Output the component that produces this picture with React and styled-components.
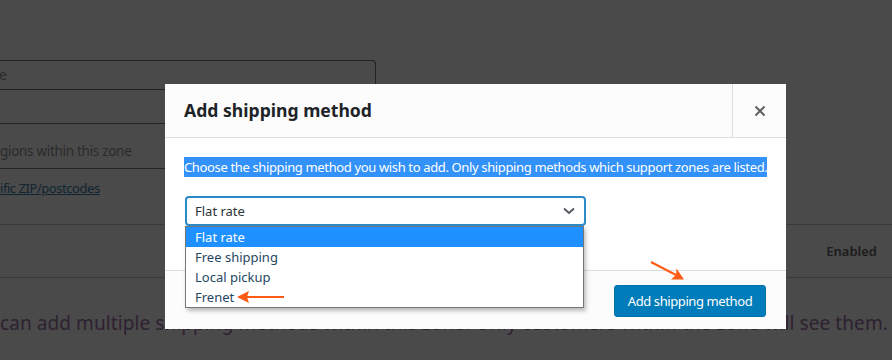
import React from "react";
import styled, { createGlobalStyle } from "styled-components";

const GlobalStyle = createGlobalStyle`
  html, body {
    margin: 0;
    padding: 0;
    background: #4a4a4a;
  }
  body {
    font-family: "Noto Sans", "Open Sans", sans-serif;
  }
`;

const options = ["Flat rate", "Free shipping", "Local pickup", "Frenet"];

const App = () => {
  return (
    <Page>
      <GlobalStyle />
      <Form>
        <ZoneInput>e</ZoneInput>
        <FieldRow $h={34} />
        <FieldRow $h={45}>
          <FieldText $pt={18}>gions within this zone</FieldText>
        </FieldRow>
        <FieldRow $h={56} $last>
          <FieldLink>ific ZIP/postcodes</FieldLink>
        </FieldRow>
      </Form>
      <TableHead>
        <HeadCell>Enabled</HeadCell>
      </TableHead>
      <Intro>
        can add multiple shipping methods within this zone. Only customers within the zone will see them.
      </Intro>

      <Modal>
        <ModalHeader>
          <ModalTitle>Add shipping method</ModalTitle>
          <CloseButton>
            <svg width="12" height="12" viewBox="0 0 12 12">
              <path d="M1.5 1.5 L10.5 10.5 M10.5 1.5 L1.5 10.5" stroke="#5f5f5f" strokeWidth="2" />
            </svg>
          </CloseButton>
        </ModalHeader>
        <ModalBody>
          <Description>
            <Selected>
              Choose the shipping method you wish to add. Only shipping methods which support zones are listed.
            </Selected>
          </Description>
          <SelectWrap>
            <SelectBox>
              <span>Flat rate</span>
              <svg width="14" height="10" viewBox="0 0 14 10">
                <path d="M2 2.5 L7 7 L12 2.5" stroke="#50575e" strokeWidth="1.8" fill="none" />
              </svg>
            </SelectBox>
            <OptionList>
              {options.map((o, i) => (
                <OptionItem key={o} $active={i === 0}>
                  {o}
                </OptionItem>
              ))}
            </OptionList>
          </SelectWrap>
        </ModalBody>
        <ModalFooter>
          <PrimaryButton>Add shipping method</PrimaryButton>
        </ModalFooter>
      </Modal>

      {/* annotation arrows */}
      <Annotation width="892" height="360" viewBox="0 0 892 360">
        <path d="M284 297 L246 297" stroke="#ff5b14" strokeWidth="2.2" />
        <path d="M237 297 L249 291 L247 297 L249 303 Z" fill="#ff5b14" />
        <path d="M651 262 L676 275" stroke="#ff5b14" strokeWidth="2" />
        <path d="M684 279.5 L671 279.5 L676 275 L676.5 268.5 Z" fill="#ff5b14" />
      </Annotation>
    </Page>
  );
};

const Page = styled.div`
  position: relative;
  width: 892px;
  height: 360px;
  overflow: hidden;
  background: #4a4a4a;
  color: #2a2a2a;
  font-size: 13px;
`;

const Form = styled.div`
  display: flex;
  flex-direction: column;
  width: 376px;
  padding-top: 60px;
`;

const ZoneInput = styled.div`
  height: 28px;
  border: 1px solid #222222;
  border-left: none;
  border-radius: 0 4px 4px 0;
  box-sizing: content-box;
  line-height: 28px;
  font-size: 14px;
  color: #2c2c2c;
  margin-left: -1px;
`;

const FieldRow = styled.div`
  height: ${(p) => p.$h - 1}px;
  border-bottom: ${(p) => (p.$last ? "none" : "1px solid #262626")};
  box-sizing: content-box;
  display: flex;
  align-items: flex-start;
`;

const FieldText = styled.div`
  padding-top: ${(p) => p.$pt}px;
  font-size: 13.5px;
  letter-spacing: -0.3px;
  color: #2a2a2a;
`;

const FieldLink = styled.div`
  padding-top: 10px;
  font-size: 13px;
  letter-spacing: -0.45px;
  color: #0f2533;
  text-decoration: underline;
`;

const TableHead = styled.div`
  height: 52px;
  border-top: 1px solid #3a3a3a;
  border-bottom: 1px solid #3a3a3a;
  display: flex;
  align-items: center;
  justify-content: flex-end;
  padding-right: 15px;
`;

const HeadCell = styled.div`
  font-size: 13px;
  font-weight: 600;
  color: #1c1c1c;
`;

const Intro = styled.div`
  margin-top: 32px;
  white-space: nowrap;
  font-size: 19px;
  letter-spacing: 0.08px;
  color: #2e2131;
`;

const Modal = styled.div`
  position: absolute;
  left: 165px;
  top: 84px;
  width: 621px;
  height: 245px;
  display: flex;
  flex-direction: column;
  background: #fff;
`;

const ModalHeader = styled.div`
  display: flex;
  height: 53px;
  background: #fcfcfc;
  border-bottom: 1px solid #dddddd;
`;

const ModalTitle = styled.h1`
  flex: 1;
  margin: 0;
  padding-left: 19px;
  line-height: 53px;
  font-size: 17.6px;
  font-weight: 700;
  color: #1d2327;
`;

const CloseButton = styled.div`
  width: 53px;
  border-left: 1px solid #dddddd;
  display: flex;
  align-items: center;
  justify-content: center;
`;

const ModalBody = styled.div`
  flex: 1;
  padding: 19px 19px 0;
  background: #fff;
`;

const Description = styled.div`
  line-height: 20px;
  font-size: 13px;
  letter-spacing: -0.36px;
  white-space: nowrap;
`;

const Selected = styled.span`
  background: #3391fa;
  color: #fff;
  padding: 1px 0;
`;

const SelectWrap = styled.div`
  position: relative;
  width: 401px;
  margin-top: 19px;
  margin-left: 1px;
`;

const SelectBox = styled.div`
  height: 26px;
  border: 2px solid #2b8ac9;
  border-radius: 4px;
  display: flex;
  align-items: center;
  justify-content: space-between;
  padding: 0 8px 0 8px;
  font-size: 13px;
  color: #2c3338;
`;

const OptionList = styled.div`
  position: absolute;
  top: 30px;
  left: 0;
  width: 397px;
  border: 1px solid #767676;
  background: #fff;
  box-shadow: 2px 3px 4px rgba(0, 0, 0, 0.25);
  z-index: 2;
`;

const OptionItem = styled.div`
  height: 20px;
  line-height: 20px;
  padding-left: 9px;
  font-size: 13px;
  background: ${(p) => (p.$active ? "#1e90ff" : "#fff")};
  color: ${(p) => (p.$active ? "#fff" : "#1f4761")};
`;

const ModalFooter = styled.div`
  height: 58px;
  border-top: 1px solid #dddddd;
  background: #fcfcfc;
  display: flex;
  align-items: center;
  justify-content: flex-end;
  padding-right: 20px;
`;

const PrimaryButton = styled.button`
  width: 152px;
  height: 32px;
  border: 1px solid #0073aa;
  border-radius: 3px;
  background: #007cba;
  color: #fff;
  font-family: inherit;
  font-size: 13px;
  letter-spacing: -0.4px;
  padding: 0;
  margin-top: 1px;
`;

const Annotation = styled.svg`
  position: absolute;
  left: 0;
  top: 0;
  pointer-events: none;
  z-index: 3;
`;

export default App;
